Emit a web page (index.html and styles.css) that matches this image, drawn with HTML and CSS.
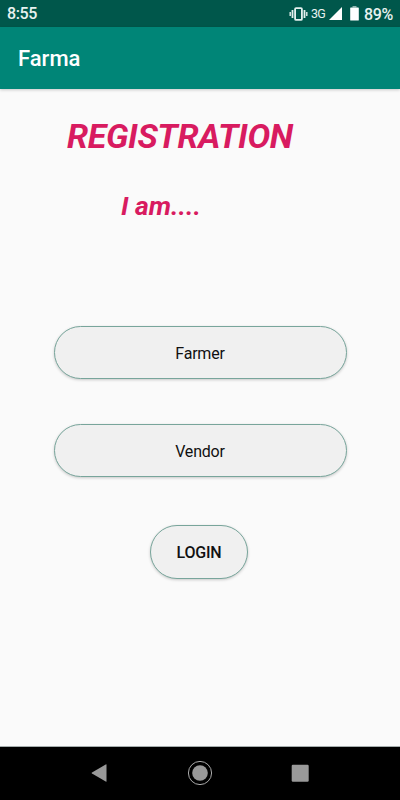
FILE: index.html
```html
<!DOCTYPE html>
<html lang="en">
<head>
<meta charset="utf-8">
<title>Farma</title>
<link rel="stylesheet" href="styles.css">
</head>
<body>
<div class="screen">
  <div class="status">
    <span class="clock">8:55</span>
    <svg class="vibrate" width="19" height="14" viewBox="0 0 19 14" fill="none" stroke="#e4f0ee">
      <rect x="6.1" y="1.1" width="6.8" height="11.8" rx="1" stroke-width="1.8"/>
      <path d="M3.5 3v8M15.5 3v8" stroke-width="1.8"/><path d="M1.2 5v4M17.8 5v4" stroke-width="1.4"/>
    </svg>
    <span class="network">3G</span>
    <svg class="signal" width="13" height="13" viewBox="0 0 13 13"><path d="M13 0v13H0z" fill="#fff"/></svg>
    <svg class="battery" width="9" height="15" viewBox="0 0 9 15"><path d="M2.5 0h4v1.5h-4z" fill="#8fb5af"/><path d="M.8 1.5h7.4q.6 0 .6.6v11.8q0 .7-.6.7H.8q-.6 0-.6-.7V2.100q0-.6.6-.6z" fill="#fff"/></svg>
    <span class="percent">89%</span>
  </div>
  <header class="appbar">Farma</header>
  <main class="content">
    <h1 class="title">REGISTRATION</h1>
    <h2 class="subtitle">I am....</h2>
    <button class="btn farmer">Farmer</button>
    <button class="btn vendor">Vendor</button>
    <button class="btn login">LOGIN</button>
  </main>
  <nav class="navbar">
    <svg width="26" height="26" viewBox="0 0 26 26"><path d="M19.500 4.800v16.400q0 .8-.8.4L5 13.600q-1-.6 0-1.200L18.700 4.400q.8-.4.8.4z" fill="#999"/></svg>
    <svg width="26" height="26" viewBox="0 0 26 26"><circle cx="13" cy="13" r="11.600" fill="none" stroke="#aaa" stroke-width="1"/><circle cx="13" cy="13" r="7.800" fill="#999"/></svg>
    <svg width="26" height="26" viewBox="0 0 26 26"><rect x="4.700" y="4.700" width="17" height="17" rx="1.200" fill="#999"/></svg>
  </nav>
</div>
</body>
</html>
```
FILE: styles.css
```css
* { box-sizing: border-box; }
body { margin: 0; font-family: Roboto, "Liberation Sans", sans-serif; }
.screen { width: 400px; height: 800px; display: flex; flex-direction: column; background: #fafafa; overflow: hidden; }
.status { height: 27px; flex: none; display: flex; align-items: center; padding: 0 7px; background: #00574b; color: #e8f2f0; white-space: nowrap; }
.clock { font-size: 16px; line-height: 27px; font-weight: 500; margin-right: auto; letter-spacing: -0.4px; }
.network { font-size: 12.500px; margin: 0 3px 0 3px; width: 15px; letter-spacing: -0.7px; }
.signal { margin-right: 8px; }
.battery { margin-right: 5px; }
.percent { font-size: 16px; font-weight: 500; width: 29px; letter-spacing: -0.4px; padding-top: 1px; }
.appbar { height: 62px; flex: none; background: #008577; color: #fff; padding-left: 18px; font-size: 22px; font-weight: 500; line-height: 64px; box-shadow: 0 1px 3px rgba(0, 0, 0, .2); }
.content { flex: 1; display: flex; flex-direction: column; align-items: center; border-bottom: 1px solid #a5adad; }
.title, .subtitle { margin: 0; align-self: flex-start; color: #d81b60; font-style: italic; font-weight: 700; white-space: nowrap; }
.title { font-size: 34px; line-height: 40px; margin: 27px 0 0 67px; letter-spacing: -0.35px; }
.subtitle { font-size: 26.500px; line-height: 32px; margin: 34px 0 0 121px; }
.btn { display: block; flex: none; width: 293px; height: 53px; padding: 2px 0 0; border: 1px solid #78a59b; border-radius: 27px; background: #f0f0f0; color: #111; font-family: inherit; font-size: 16px; letter-spacing: -0.2px; box-shadow: 0 1px 3px rgba(0, 0, 0, .2); }
.farmer { margin-top: 104px; }
.vendor { margin-top: 45px; }
.login { width: 98px; height: 54px; margin: 48px 2px 0 0; padding-top: 0; font-weight: 500; }
.navbar { height: 53px; flex: none; background: #000; display: flex; justify-content: center; align-items: center; gap: 74px; padding-bottom: 1px; }
```
